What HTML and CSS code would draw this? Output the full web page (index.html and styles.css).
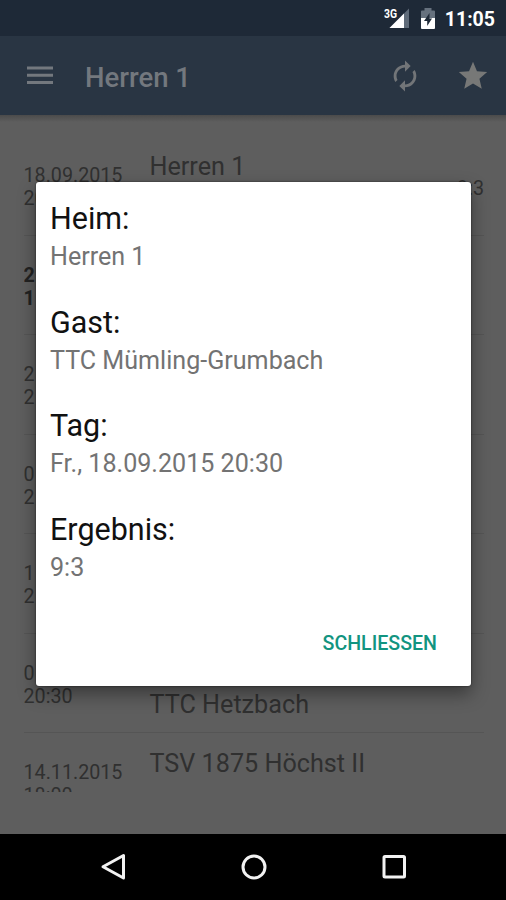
FILE: index.html
```html
<!DOCTYPE html>
<html lang="de">
<head>
  <meta charset="UTF-8" />
  <meta name="viewport" content="width=device-width, initial-scale=1.0"/>
  <title>Herren 1</title>
  <link rel="stylesheet" href="styles.css">
</head>
<body>
  <div class="screen">
    <div class="status-bar">
      <svg class="signal" width="26" height="24" viewBox="0 0 26 24">
        <path d="M25 2.500V22H5.500z" fill="#5f6b79"/>
        <path d="M20 7.500V22H5.500z" fill="#fff"/>
        <text x="0" y="11.500" class="network" textLength="13" lengthAdjust="spacingAndGlyphs">3G</text>
      </svg>
      <svg class="battery" width="16" height="22" viewBox="0 0 16 22">
        <path d="M4.500 2.500V0H11.500V2.500H14Q15 2.500 15 3.500V10H1V3.500Q1 2.500 2 2.500z" fill="#66717e"/>
        <path d="M1 10H15V20Q15 21 14 21H2Q1 21 1 20z" fill="#fff"/>
        <path d="M9.500 5L4 13H7.200V18L12 10.500H9.500z" fill="#1e2937"/>
      </svg>
      <span class="clock">11:05</span>
    </div>

    <div class="toolbar">
      <svg class="menu-icon" width="28" height="20" viewBox="0 0 28 20">
        <path d="M1 2H27M1 9.300H27M1 16.500H27" stroke="#73787e" stroke-width="3"/>
      </svg>
      <h1 class="title">Herren 1</h1>
      <svg class="sync-icon" width="34" height="34" viewBox="0 0 24 24">
        <path fill="#727578" d="M12 6v3l4-4-4-4v3c-4.420 0-8 3.580-8 8 0 1.570.460 3.030 1.240 4.260L6.700 14.800c-.450-.830-.700-1.790-.700-2.800 0-3.310 2.690-6 6-6zm6.760 1.740L17.300 9.200c.440.840.700 1.790.700 2.800 0 3.310-2.690 6-6 6v-3l-4 4 4 4v-3c4.420 0 8-3.580 8-8 0-1.570-.460-3.030-1.240-4.260z"/>
      </svg>
      <svg class="star-icon" width="34" height="34" viewBox="0 0 24 24">
        <path fill="#777877" d="M12 17.270L18.180 21l-1.640-7.030L22 9.240l-7.190-.610L12 2 9.190 8.630 2 9.240l5.460 4.730L5.820 21z"/>
      </svg>
    </div>

    <div class="content">
      <div class="matches">
        <div class="match">
          <div class="date">18.09.2015<br>20:30</div>
          <div class="teams">Herren 1</div>
          <div class="score">9:3</div>
        </div>
        <div class="match home">
          <div class="date">2<br>1</div>
        </div>
        <div class="match">
          <div class="date">2<br>2</div>
        </div>
        <div class="match">
          <div class="date">0<br>2</div>
        </div>
        <div class="match">
          <div class="date">1<br>2</div>
        </div>
        <div class="match">
          <div class="date">0<br>20:30</div>
          <div class="teams"><br>TTC Hetzbach</div>
        </div>
        <div class="match">
          <div class="date">14.11.2015<br>18:00</div>
          <div class="teams">TSV 1875 Höchst II</div>
        </div>
      </div>
    </div>

    <div class="nav-bar">
      <svg width="28" height="30" viewBox="0 0 28 30">
        <path d="M23.500 3.500V26L3 14.800z" fill="none" stroke="#f2f2f2" stroke-width="3" stroke-linejoin="round"/>
      </svg>
      <svg width="28" height="30" viewBox="0 0 28 30">
        <circle cx="14" cy="15" r="11" fill="none" stroke="#f2f2f2" stroke-width="3"/>
      </svg>
      <svg width="28" height="30" viewBox="0 0 28 30">
        <rect x="4" y="4.500" width="20.500" height="20.500" rx="1" fill="none" stroke="#f2f2f2" stroke-width="3"/>
      </svg>
    </div>

    <div class="dialog">
      <h2>Heim:</h2>
      <p>Herren 1</p>
      <h2>Gast:</h2>
      <p>TTC Mümling-Grumbach</p>
      <h2>Tag:</h2>
      <p>Fr., 18.09.2015 20:30</p>
      <h2>Ergebnis:</h2>
      <p>9:3</p>
      <button class="close">SCHLIESSEN</button>
    </div>
  </div>
</body>
</html>
```
FILE: styles.css
```css
* {
  box-sizing: border-box;
}

body {
  font-family: Roboto, sans-serif;
  margin: 0;
  background-color: #000;
}

.screen {
  position: relative;
  width: 506px;
  height: 900px;
  overflow: hidden;
  display: flex;
  flex-direction: column;
}

.status-bar {
  height: 36px;
  flex-shrink: 0;
  background-color: #1e2937;
  display: flex;
  justify-content: flex-end;
  padding: 6px 11px 0 0;
}

.signal {
  margin-right: 10px;
}

.battery {
  margin: 2px 9px 0 0;
}

.network {
  font-size: 12.500px;
  font-weight: 700;
  fill: #fff;
  stroke: #1e2937;
  stroke-width: 2px;
  paint-order: stroke;
}

.clock {
  color: #fff;
  font-size: 19.500px;
  font-weight: 700;
  line-height: 27px;
}

.toolbar {
  height: 79px;
  flex-shrink: 0;
  background-color: #293543;
  display: flex;
  align-items: center;
  padding: 0 16px 0 26px;
}

.menu-icon {
  margin-right: 31px;
}

.title {
  flex: 1;
  margin: 3px 0 0;
  color: #73787e;
  font-size: 27.500px;
  font-weight: 500;
}

.sync-icon {
  margin-right: 34px;
}

.content {
  height: 719px;
  flex-shrink: 0;
  background: linear-gradient(#4b4b4b, #5e5e5e 7px);
  padding: 21px 22px 42px 23.500px;
}

.matches {
  height: 656px;
  overflow: hidden;
}

.match {
  display: flex;
  height: 99.500px;
  border-bottom: 1px solid #555;
  color: #303030;
}

.date {
  width: 126px;
  padding-top: 28px;
  font-size: 19.700px;
  line-height: 23px;
}

.home .date {
  font-weight: 700;
  color: #222;
}

.teams {
  flex: 1;
  padding-top: 11px;
  font-size: 25.200px;
  line-height: 40px;
}

.score {
  padding-top: 41px;
  font-size: 19.700px;
  line-height: 23px;
}

.nav-bar {
  flex: 1;
  background-color: #000;
  display: flex;
  justify-content: center;
  align-items: center;
  gap: 112px;
  padding-left: 1px;
}

/* lies over the match list */
.dialog {
  position: absolute;
  left: 36px;
  top: 182px;
  width: 435px;
  height: 504px;
  padding: 18px 14px;
  background-color: #fff;
  border-radius: 3px;
  box-shadow: 0 0 2px rgba(0, 0, 0, 0.7), 0 8px 18px rgba(0, 0, 0, 0.4);
  display: flex;
  flex-direction: column;
}

.dialog h2 {
  margin: 0;
  color: #111;
  font-size: 30.500px;
  font-weight: 400;
  line-height: 38px;
}

.dialog p {
  margin: 0 0 28.700px;
  color: #737373;
  font-size: 25.100px;
  line-height: 37px;
}

.close {
  align-self: flex-end;
  margin: 17px 20px 0 0;
  padding: 0;
  border: 0;
  background: none;
  color: #129480;
  font-family: inherit;
  font-size: 19.600px;
  font-weight: 500;
  line-height: 24px;
}
```
